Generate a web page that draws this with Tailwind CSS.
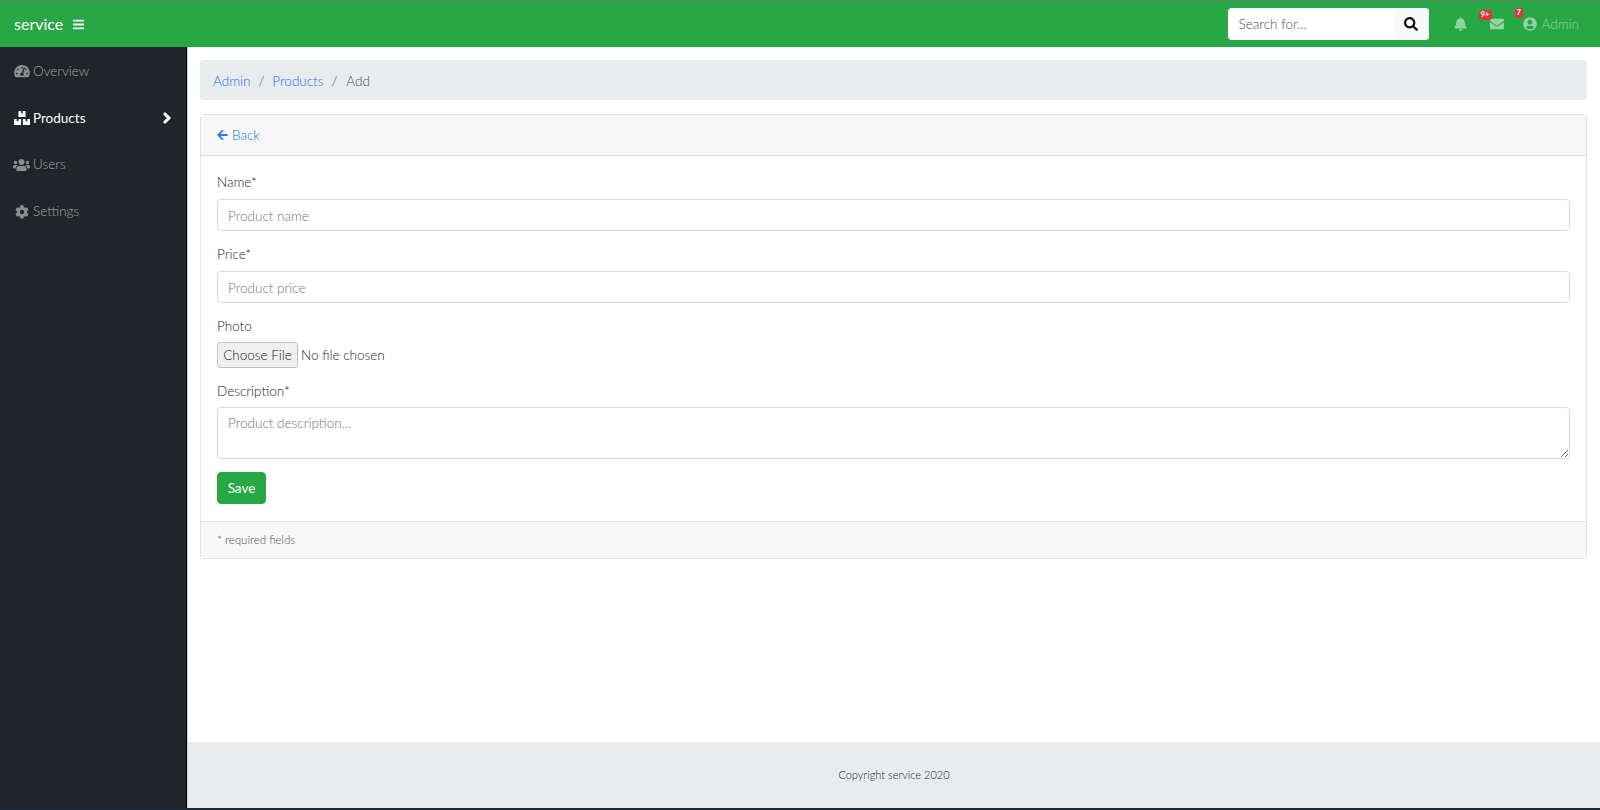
<!DOCTYPE html>
<html lang="en"><head><meta charset="utf-8"><title>Add product</title>
<script src="https://cdn.jsdelivr.net/npm/@tailwindcss/browser@4"></script></head>
<body class="bg-white overflow-hidden font-['Lato',sans-serif] font-light text-[13.5px] text-[#495057]">
<div class="flex flex-col h-[810px] w-[1600px]">
<header class="h-[47px] shrink-0 bg-[#28a745] border-t border-[#5f7f68] flex items-center pl-[14px] pr-[21px] text-white">
  <span class="text-[16px] leading-none font-normal">service</span>
  <svg class="ml-[10px] w-[11px] h-[13px] fill-white" viewBox="0 0 448 512"><path d="M16 132h416c8.837 0 16-7.163 16-16V76c0-8.837-7.163-16-16-16H16C7.163 60 0 67.163 0 76v40c0 8.837 7.163 16 16 16zm0 160h416c8.837 0 16-7.163 16-16v-40c0-8.837-7.163-16-16-16H16c-8.837 0-16 7.163-16 16v40c0 8.837 7.163 16 16 16zm0 160h416c8.837 0 16-7.163 16-16v-40c0-8.837-7.163-16-16-16H16c-8.837 0-16 7.163-16 16v40c0 8.837 7.163 16 16 16z"/></svg>
  <div class="ml-auto flex w-[201px] h-[32px] rounded-[4px] overflow-hidden bg-white">
    <input class="flex-1 min-w-0 pl-[11px] pt-[1px] text-[13.5px] font-light outline-none placeholder:text-[#495057]" placeholder="Search for...">
    <div class="w-[35px] bg-[#f8f9fa] flex items-center justify-center"><svg class="w-[14px] h-[14px] fill-[#111]" viewBox="0 0 512 512"><path d="M505 442.7L405.3 343c-4.5-4.5-10.6-7-17-7H372c27.6-35.3 44-79.7 44-128C416 93.1 322.9 0 208 0S0 93.1 0 208s93.1 208 208 208c48.3 0 92.7-16.4 128-44v16.3c0 6.4 2.5 12.5 7 17l99.7 99.7c9.4 9.4 24.6 9.4 33.9 0l28.3-28.3c9.4-9.4 9.4-24.6.1-34zM208 336c-70.7 0-128-57.2-128-128 0-70.7 57.2-128 128-128 70.7 0 128 57.2 128 128 0 70.7-57.2 128-128 128z"/></svg></div>
  </div>
  <svg class="ml-[25px] w-[13px] h-[14px] fill-[#93d3a3]" viewBox="0 0 448 512"><path d="M224 512c35.32 0 63.97-28.65 63.97-64H160.03c0 35.35 28.65 64 63.97 64zm215.39-149.71c-19.32-20.76-55.47-51.99-55.47-154.29 0-77.7-54.48-139.9-127.94-155.16V32c0-17.67-14.32-32-31.98-32s-31.98 14.33-31.98 32v20.84C118.56 68.1 64.08 130.3 64.08 208c0 102.3-36.15 133.53-55.47 154.29-6 6.45-8.66 14.16-8.61 21.71.11 16.4 12.98 32 32.1 32h383.8c19.12 0 32-15.6 32.1-32 .05-7.55-2.61-15.27-8.61-21.71z"/></svg>
  <div class="relative ml-[23px] flex">
    <svg class="w-[14px] h-[14px] fill-[#93d3a3]" viewBox="0 0 512 512"><path d="M502.3 190.8c3.9-3.1 9.7-.2 9.7 4.7V400c0 26.5-21.5 48-48 48H48c-26.5 0-48-21.5-48-48V195.6c0-5 5.7-7.8 9.7-4.7 22.4 17.4 52.1 39.5 154.1 113.6 21.1 15.4 56.7 47.8 92.2 47.6 35.7.3 72-32.8 92.3-47.6 102-74.1 131.6-96.3 154-113.7zM256 320c23.2.4 56.6-29.2 73.4-41.4 132.7-96.3 142.8-104.7 173.4-128.7 5.8-4.5 9.2-11.5 9.2-18.9v-19c0-26.5-21.5-48-48-48H48C21.5 64 0 85.5 0 112v19c0 7.4 3.4 14.3 9.2 18.9 30.6 23.9 40.7 32.4 173.4 128.7 16.8 12.2 50.2 41.8 73.4 41.4z"/></svg>
    <span class="absolute left-[-11px] top-[-7px] w-[13px] h-[10px] rounded-[3px] bg-[#dc3545] text-white text-[7.5px] font-bold leading-[10px] text-center">9+</span>
  </div>
  <div class="relative ml-[19px] flex items-center">
    <svg class="w-[14px] h-[14px] fill-[#93d3a3]" viewBox="0 0 496 512"><path d="M248 8C111 8 0 119 0 256s111 248 248 248 248-111 248-248S385 8 248 8zm0 96c48.6 0 88 39.4 88 88s-39.4 88-88 88-88-39.4-88-88 39.4-88 88-88zm0 344c-58.7 0-111.3-26.6-146.5-68.2 18.8-35.4 55.6-59.8 98.5-59.8 2.4 0 4.8.4 7.1 1.1 13 4.2 26.6 6.9 40.9 6.9 14.3 0 28-2.7 40.9-6.9 2.3-.7 4.7-1.1 7.1-1.1 42.9 0 79.7 24.4 98.5 59.8C359.3 421.4 306.7 448 248 448z"/></svg>
    <span class="absolute left-[-8px] top-[-6px] w-[8px] h-[10px] rounded-[2px] bg-[#dc3545] text-white text-[7.5px] font-bold leading-[10px] text-center">7</span>
    <span class="ml-[5px] text-[#93d3a3] text-[13.5px]">Admin</span>
  </div>
</header>
<div class="flex flex-1 min-h-0">
  <aside class="w-[187px] shrink-0 bg-[#212529] border-r border-black text-[13.5px] text-[#a3a6a8]">
    <a class="h-[47px] pt-[1px] flex items-center pl-[14px]"><svg class="w-[16px] h-[14px] fill-[#8b8e91]" viewBox="0 0 576 512"><path d="M288 32C128.94 32 0 160.94 0 320c0 52.8 14.25 102.26 39.06 144.8 5.61 9.62 16.3 15.2 27.44 15.2h443c11.14 0 21.83-5.58 27.44-15.2C561.75 422.26 576 372.8 576 320c0-159.06-128.94-288-288-288zm0 64c14.71 0 26.58 10.13 30.32 23.65-1.11 2.26-2.64 4.23-3.45 6.67l-9.22 27.67c-5.13 3.49-10.97 6.01-17.64 6.01-17.67 0-32-14.33-32-32S270.33 96 288 96zM96 384c-17.67 0-32-14.33-32-32s14.33-32 32-32 32 14.33 32 32-14.33 32-32 32zm48-160c-17.67 0-32-14.33-32-32s14.33-32 32-32 32 14.33 32 32-14.33 32-32 32zm246.77-72.41l-61.33 184C343.13 347.33 352 364.54 352 384c0 11.72-3.38 22.55-8.88 32H232.88c-5.5-9.45-8.88-20.28-8.88-32 0-33.94 26.5-61.43 59.9-63.59l61.34-184.01c4.17-12.56 17.73-19.45 30.36-15.17 12.57 4.19 19.35 17.79 15.17 30.36zm14.66 57.2l15.52-46.55c3.47-1.29 7.13-2.23 11.05-2.23 17.67 0 32 14.33 32 32s-14.33 32-32 32c-11.38-.01-20.89-6.28-26.57-15.22zM480 384c-17.67 0-32-14.33-32-32s14.33-32 32-32 32 14.33 32 32-14.33 32-32 32z"/></svg><span class="ml-[3px]">Overview</span></a>
    <a class="h-[47px] pt-[1px] flex items-center pl-[14px] text-white font-normal"><svg class="w-[16px] h-[16px] fill-white" viewBox="0 0 576 512"><path d="M560 288h-80v96l-32-21.3-32 21.3v-96h-80c-8.8 0-16 7.2-16 16v192c0 8.8 7.2 16 16 16h224c8.8 0 16-7.2 16-16V304c0-8.8-7.2-16-16-16zm-384-64h224c8.8 0 16-7.2 16-16V16c0-8.8-7.2-16-16-16h-80v96l-32-21.3L256 96V0h-80c-8.8 0-16 7.2-16 16v192c0 8.8 7.2 16 16 16zm64 64h-80v96l-32-21.3L96 384v-96H16c-8.8 0-16 7.2-16 16v192c0 8.8 7.2 16 16 16h224c8.8 0 16-7.2 16-16V304c0-8.8-7.2-16-16-16z"/></svg><span class="ml-[3px]">Products</span><svg class="ml-auto mr-[15px] w-[8px] h-[12px] fill-white stroke-white stroke-[50]" viewBox="0 0 320 512"><path d="M285.476 272.971L91.132 467.314c-9.373 9.373-24.569 9.373-33.941 0l-22.667-22.667c-9.357-9.357-9.375-24.522-.04-33.901L188.505 256 34.484 101.255c-9.335-9.379-9.317-24.544.04-33.901l22.667-22.667c9.373-9.373 24.569-9.373 33.941 0L285.475 239.03c9.373 9.372 9.373 24.568.001 33.941z"/></svg></a>
    <a class="h-[47px] flex items-center pl-[13px]"><svg class="w-[17px] h-[14px] fill-[#8b8e91]" viewBox="0 0 640 512"><path d="M96 224c35.3 0 64-28.7 64-64s-28.7-64-64-64-64 28.7-64 64 28.7 64 64 64zm448 0c35.3 0 64-28.7 64-64s-28.7-64-64-64-64 28.7-64 64 28.7 64 64 64zm32 32h-64c-17.6 0-33.5 7.1-45.1 18.6 40.3 22.1 68.9 62 75.1 109.4h66c17.7 0 32-14.3 32-32v-32c0-35.3-28.7-64-64-64zm-256 0c61.9 0 112-50.1 112-112S381.9 32 320 32 208 82.1 208 144s50.1 112 112 112zm76.8 32h-8.3c-20.8 10-43.9 16-68.5 16s-47.6-6-68.5-16h-8.3C179.6 288 128 339.6 128 403.2V432c0 26.5 21.5 48 48 48h288c26.5 0 48-21.5 48-48v-28.8c0-63.6-51.6-115.2-115.2-115.2zm-223.7-13.4C161.5 263.1 145.6 256 128 256H64c-35.3 0-64 28.7-64 64v32c0 17.7 14.3 32 32 32h65.9c6.3-47.4 34.9-87.3 75.2-109.4z"/></svg><span class="ml-[3px]">Users</span></a>
    <a class="h-[47px] flex items-center pl-[15px]"><svg class="w-[14px] h-[14px] fill-[#8b8e91]" viewBox="0 0 512 512"><path d="M487.4 315.7l-42.6-24.6c4.3-23.2 4.3-47 0-70.2l42.6-24.6c4.9-2.8 7.1-8.6 5.5-14-11.1-35.6-30-67.8-54.7-94.6-3.8-4.1-10-5.1-14.8-2.3L380.8 110c-17.9-15.4-38.5-27.3-60.8-35.1V25.8c0-5.6-3.9-10.5-9.4-11.7-36.7-8.2-74.3-7.8-109.2 0-5.5 1.2-9.4 6.1-9.4 11.7V75c-22.2 7.9-42.8 19.8-60.8 35.1L88.7 85.5c-4.9-2.8-11-1.9-14.8 2.3-24.7 26.7-43.6 58.9-54.7 94.6-1.7 5.4.6 11.2 5.5 14L67.3 221c-4.3 23.2-4.3 47 0 70.2l-42.6 24.6c-4.9 2.8-7.1 8.6-5.5 14 11.1 35.6 30 67.8 54.7 94.6 3.8 4.1 10 5.1 14.8 2.3l42.6-24.6c17.9 15.4 38.5 27.3 60.8 35.1v49.2c0 5.6 3.9 10.5 9.4 11.7 36.7 8.2 74.3 7.8 109.2 0 5.5-1.2 9.4-6.1 9.4-11.7v-49.2c22.2-7.9 42.8-19.8 60.8-35.1l42.6 24.6c4.9 2.8 11 1.9 14.8-2.3 24.7-26.7 43.6-58.9 54.7-94.6 1.5-5.5-.7-11.3-5.6-14.1zM256 336c-44.1 0-80-35.9-80-80s35.9-80 80-80 80 35.9 80 80-35.9 80-80 80z"/></svg><span class="ml-[4px]">Settings</span></a>
  </aside>
  <main class="flex-1 min-w-0 flex flex-col border-l border-[#cfd2d5]">
    <div class="flex-1 pt-[13px] pl-[12px] pr-[13px]">
      <nav class="h-[40px] pt-[2px] rounded-[4px] bg-[#e9ecef] flex items-center pl-[13px] text-[#495057]">
        <a class="text-[#1a6ff5]">Admin</a><span class="mx-[8px]">/</span><a class="text-[#1a6ff5]">Products</a><span class="mx-[8px]">/</span><span class="ml-[1px]">Add</span>
      </nav>
      <section class="mt-[14px] border border-[#e2e2e2] rounded-[4px]">
        <div class="h-[41px] bg-[#f7f7f7] border-b border-[#dfdfdf] flex items-center pl-[16px] text-[#1a6ff5]"><svg class="w-[11px] h-[12px] fill-[#2f7df6]" viewBox="0 0 448 512"><path d="M257.5 445.1l-22.2 22.2c-9.4 9.4-24.6 9.4-33.9 0L7 273c-9.4-9.4-9.4-24.6 0-33.9L201.4 44.7c9.4-9.4 24.6-9.4 33.9 0l22.2 22.2c9.5 9.5 9.3 25-.4 34.3L136.6 216H424c13.3 0 24 10.7 24 24v32c0 13.3-10.7 24-24 24H136.6l120.5 114.8c9.8 9.3 10 24.8.4 34.3z"/></svg><a class="ml-[4px]">Back</a></div>
        <form class="px-[16px] pt-[16px] pb-[17px] flex flex-col">
          <label class="h-[21px] leading-[21px] text-[#212529]">Name*</label>
          <input class="mt-[6px] h-[32px] pt-[1px] border border-[#d5dae0] rounded-[4px] px-[10px] outline-none font-light placeholder:text-[#6c757d]" placeholder="Product name">
          <label class="mt-[13px] h-[21px] leading-[21px] text-[#212529]">Price*</label>
          <input class="mt-[6px] h-[32px] pt-[1px] border border-[#d5dae0] rounded-[4px] px-[10px] outline-none font-light placeholder:text-[#6c757d]" placeholder="Product price">
          <label class="mt-[13px] h-[21px] leading-[21px] text-[#212529]">Photo</label>
          <input type="file" class="mt-[5px] h-[26px] text-[13.5px] font-light text-[#212529] file:h-[26px] file:w-[81px] file:mr-[3px] file:px-0 file:bg-[#efefef] file:border file:border-[#c4c4c4] file:rounded-[3px] file:text-[#212529] file:font-light">
          <label class="mt-[13px] h-[21px] leading-[21px] text-[#212529]">Description*</label>
          <textarea class="mt-[5px] h-[52px] border border-[#d5dae0] rounded-[4px] px-[10px] py-[5px] outline-none font-light placeholder:text-[#6c757d]" placeholder="Product description..."></textarea>
          <button type="button" class="mt-[13px] w-[49px] h-[32px] bg-[#28a745] border border-[#28a745] rounded-[4px] text-white font-normal">Save</button>
        </form>
        <div class="h-[37px] bg-[#f7f7f7] border-t border-[#dfdfdf] flex items-center pl-[16px] text-[11.5px] text-[#495057]">* required fields</div>
      </section>
    </div>
    <footer class="h-[66px] shrink-0 bg-[#e9ecef] flex items-center justify-center text-[11px] text-[#212529]">Copyright service 2020</footer>
  </main>
</div>
<div class="h-[2px] shrink-0 bg-[#14293a]"></div>
</div>
</body></html>
